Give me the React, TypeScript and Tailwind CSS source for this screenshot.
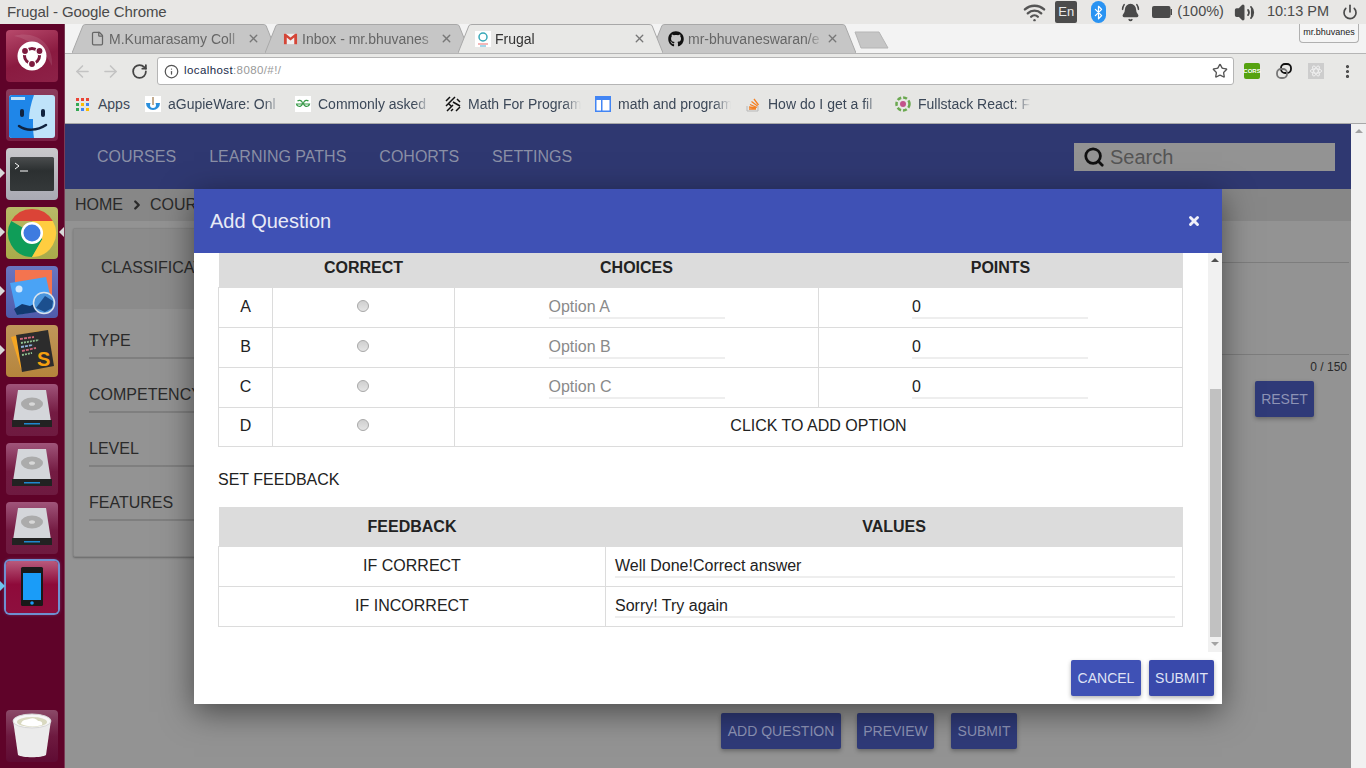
import React from 'react';
import { ArrowLeft, ArrowRight, RotateCw, Info, Star, X, Wifi, BellRing, Volume2, Power, Search, ChevronRight, EllipsisVertical, File, Bluetooth } from 'lucide-react';
import { FaGithub } from 'react-icons/fa';

const Tile: React.FC<{ bg: string; arrow?: 'left' | 'both' | 'blue'; active?: boolean; children: React.ReactNode }> = ({ bg, arrow, active, children }) => (
  <div className="relative w-[64px] flex justify-center">
    {arrow && (
      <span className={`absolute left-0 top-[20px] w-0 h-0 border-y-[5px] border-y-transparent border-l-[5px] ${arrow === 'blue' ? 'border-l-[#6ec6f0]' : 'border-l-[#d8d8d8]'}`} />
    )}
    {arrow === 'both' && (
      <span className="absolute right-0 top-[20px] w-0 h-0 border-y-[5px] border-y-transparent border-r-[5px] border-r-[#d8d8d8]" />
    )}
    <div className={`w-[52px] h-[52px] rounded-[4px] overflow-hidden ${bg} ${active ? 'ring-2 ring-[#6f8fd0] shadow-[0_0_4px_#6f8fd0]' : ''}`}>
      {children}
    </div>
  </div>
);

const UbuntuIcon = () => (
  <svg viewBox="0 0 52 52" className="w-full h-full">
    <path d="M8 6c20-6 40 6 38 30-6-14-20-26-38-30z" fill="#fff" opacity="0.1" />
    <circle cx="26" cy="26" r="14.500" fill="#fff" />
    <circle cx="26" cy="26" r="7.500" fill="none" stroke="#7d1a3e" strokeWidth="3" />
    <circle cx="33.500" cy="21" r="3.600" fill="#7d1a3e" stroke="#fff" strokeWidth="1.400" />
    <circle cx="19" cy="21" r="3.600" fill="#7d1a3e" stroke="#fff" strokeWidth="1.400" />
    <circle cx="26" cy="34" r="3.600" fill="#7d1a3e" stroke="#fff" strokeWidth="1.400" />
  </svg>
);

const FinderIcon = () => (
  <svg viewBox="0 0 52 52" className="w-full h-full">
    <rect x="3" y="6" width="46" height="43" rx="3" fill="#bfe3fa" />
    <path d="M3 9a3 3 0 0 1 3-3h22c-3 8-5 17-5 24h4c0 7 0 13 1 19H6a3 3 0 0 1-3-3z" fill="#1f86e8" />
    <rect x="5" y="8" width="14" height="3" fill="#bfe3fa" />
    <rect x="14" y="20" width="4" height="8" rx="2" fill="#10233f" />
    <rect x="35" y="20" width="4" height="8" rx="2" fill="#10233f" />
    <path d="M13 37c7 5 18 5 27-1" fill="none" stroke="#10233f" strokeWidth="2.500" strokeLinecap="round" />
  </svg>
);

const TerminalIcon = () => (
  <svg viewBox="0 0 52 52" className="w-full h-full">
    <defs>
      <linearGradient id="term" x1="0" y1="0" x2="0" y2="1">
        <stop offset="0" stopColor="#4a4d4e" />
        <stop offset="0.4" stopColor="#2c3031" />
        <stop offset="1" stopColor="#343839" />
      </linearGradient>
    </defs>
    <rect x="4" y="9" width="44" height="34" rx="1.500" fill="url(#term)" />
    <path d="M9 15l4 3-4 3" fill="none" stroke="#fff" strokeWidth="1" />
    <path d="M14 23h8" stroke="#fff" strokeWidth="1" />
  </svg>
);

const ChromeIcon = () => (
  <svg viewBox="0 0 52 52" className="w-full h-full">
    <path d="M5.200 14A24 24 0 0 1 46.800 14H26z" fill="#db4437" />
    <path d="M5.200 14A24 24 0 0 0 26 50L36.400 32 26 26z" fill="#0f9d58" />
    <path d="M46.800 14A24 24 0 0 1 26 50L36.400 32 26 14z" fill="#ffcd40" />
    <circle cx="26" cy="26" r="11" fill="#fff" />
    <circle cx="26" cy="26" r="8.500" fill="#3e7be0" />
  </svg>
);

const PhotosIcon = () => (
  <svg viewBox="0 0 52 52" className="w-full h-full">
    <rect x="9" y="4" width="37" height="34" fill="#f4744f" />
    <path d="M4 17l36-6 7 31-36 7z" fill="#4aa3f5" />
    <circle cx="13" cy="23" r="3.500" fill="#cfe8ff" />
    <path d="M8 43l8-5 8 2 8-4 5 9-26 4z" fill="#123a70" />
    <circle cx="38" cy="37" r="10.500" fill="#4a95dc" stroke="#d6e3ee" strokeWidth="1.500" />
    <path d="M30 42l9-12 8 5-1 7-7 4z" fill="#1c4f8e" />
  </svg>
);

const SublimeIcon = () => (
  <svg viewBox="0 0 52 52" className="w-full h-full">
    <path d="M5 12l28-6 4 26-22 12z" fill="#f5a623" />
    <path d="M10 10l32-5 6 36-32 6z" fill="#2c2c2c" />
    <path d="M14 14l14-2M16 26l14-3" stroke="#d0677a" strokeWidth="1.800" strokeDasharray="3 1" />
    <path d="M15 18l18-3M16 30l10-2" stroke="#8fbf8f" strokeWidth="1.800" strokeDasharray="2 1" />
    <path d="M15 22l12-2" stroke="#8fb0d8" strokeWidth="1.800" strokeDasharray="3 1" />
    <text x="31" y="41" fontSize="20" fontWeight="700" fill="#f5a00f" fontFamily="Liberation Sans, sans-serif">S</text>
  </svg>
);

const DriveIcon = () => (
  <svg viewBox="0 0 52 52" className="w-full h-full">
    <path d="M12 6h28l5 32H7z" fill="#d4d6da" />
    <ellipse cx="26" cy="20" rx="11" ry="6.500" fill="#ababab" />
    <ellipse cx="26" cy="20" rx="3" ry="1.800" fill="#d8d8d8" />
    <rect x="6" y="36" width="40" height="7" fill="#222" />
    <rect x="18" y="39" width="16" height="1.500" fill="#1f88d0" />
  </svg>
);

const PhoneIcon = () => (
  <svg viewBox="0 0 52 52" className="w-full h-full">
    <rect x="15" y="6" width="22" height="39" rx="1.500" fill="#191919" />
    <rect x="17" y="12" width="18" height="27" fill="#1a9cf8" />
    <circle cx="26" cy="42" r="1.800" fill="#1a9cf8" />
  </svg>
);

const TrashIcon = () => (
  <svg viewBox="0 0 52 52" className="w-full h-full">
    <path d="M7 10h38l-5 35c-4 3-24 3-28 0z" fill="#ebebeb" />
    <ellipse cx="26" cy="11" rx="19" ry="7" fill="#f7f7f7" stroke="#d5d5d5" />
    <ellipse cx="26" cy="12" rx="15" ry="5" fill="#d9d9c0" />
    <path d="M15 14c1-5 6-4 8-5 4-2 8 0 9 2 3 0 5 1 4 4-6 2-15 2-21-1z" fill="#fff" />
  </svg>
);

const Launcher = () => (
  <aside className="w-[65px] shrink-0 bg-[#5f0329] border-r border-[#7a3a55] flex flex-col gap-[7px] pt-[6px] pb-[6px]">
    <Tile bg="bg-[linear-gradient(160deg,#b84a6c,#8a1a40_55%,#8d2248)]"><UbuntuIcon /></Tile>
    <Tile bg="bg-[linear-gradient(180deg,#8b3c5c,#7a1f45)]"><FinderIcon /></Tile>
    <Tile bg="bg-[linear-gradient(180deg,#c9c9cc,#a9a9b3)]" arrow="left"><TerminalIcon /></Tile>
    <Tile bg="bg-[linear-gradient(180deg,#b8ba68,#a9ab4a)]" arrow="both"><ChromeIcon /></Tile>
    <Tile bg="bg-[linear-gradient(180deg,#6a76c0,#4f5cab)]" arrow="left"><PhotosIcon /></Tile>
    <Tile bg="bg-[linear-gradient(180deg,#c0965a,#b5853c)]" arrow="left"><SublimeIcon /></Tile>
    <Tile bg="bg-[linear-gradient(180deg,#a0557a,#741b42_55%,#6e1a40)]"><DriveIcon /></Tile>
    <Tile bg="bg-[linear-gradient(180deg,#a0557a,#741b42_55%,#6e1a40)]"><DriveIcon /></Tile>
    <Tile bg="bg-[linear-gradient(180deg,#a0557a,#741b42_55%,#6e1a40)]"><DriveIcon /></Tile>
    <Tile bg="bg-[linear-gradient(180deg,#b85a7c,#8e0a3a_45%,#8e0f3e)]" arrow="blue" active><PhoneIcon /></Tile>
    <div className="mt-auto">
      <Tile bg="bg-[linear-gradient(180deg,#8b4a68,#6e1a40_50%,#5f0b33)]"><TrashIcon /></Tile>
    </div>
  </aside>
);

const TopPanel = () => (
  <header className="h-[24px] shrink-0 bg-[#e8e7e5] flex items-center text-[#4a4a4a]">
    <span className="pl-[7px] text-[15px] tracking-[-0.100px]">Frugal - Google Chrome</span>
    <div className="ml-auto flex items-center">
      <Wifi size={23} strokeWidth={2.500} className="text-[#555] mr-[9px]" />
      <span className="w-[22px] h-[22px] bg-[#4c4c4c] text-[#e8e8e8] rounded-[2px] text-[13px] flex items-center justify-center mr-[14px]">En</span>
      <span className="w-[15px] h-[22px] rounded-full bg-[#2a93f2] flex items-center justify-center mr-[15px]">
        <Bluetooth size={15} strokeWidth={2} className="text-white" />
      </span>
      <BellRing size={19} fill="#4a4a4a" className="text-[#4a4a4a] mr-[12px]" />
      <svg viewBox="0 0 20 12" className="w-[20px] h-[12px] mr-[5px]">
        <rect width="18.500" height="12" rx="2" fill="#4a4a4a" />
        <rect x="18.500" y="3" width="1.500" height="6" fill="#4a4a4a" />
      </svg>
      <span className="text-[14.500px] mr-[10px]">(100%)</span>
      <Volume2 size={21} fill="#4a4a4a" className="text-[#4a4a4a] mr-[12px]" />
      <span className="text-[14.500px] mr-[13px]">10:13 PM</span>
      <Power size={16} strokeWidth={2.500} className="text-[#4a4a4a] mr-[8px]" />
    </div>
  </header>
);

const GmailIcon = () => (
  <svg viewBox="0 0 16 16" className="w-[15px] h-[15px]">
    <rect x="1" y="3" width="14" height="11" fill="#eee" />
    <path d="M1 3v11h3V7l4 3 4-3v7h3V3h-2L8 7 3 3z" fill="#d44638" />
  </svg>
);

const FrugalIcon = () => (
  <svg viewBox="0 0 16 16" className="w-[16px] h-[16px]">
    <rect width="16" height="16" fill="#fff" />
    <circle cx="8" cy="6" r="4" fill="none" stroke="#38a8b8" strokeWidth="1.500" />
    <path d="M3 13h10" stroke="#f0a0a0" strokeWidth="1.500" />
    <path d="M5 15h6" stroke="#48b0d8" />
  </svg>
);

const Tab: React.FC<{ title: string; icon: React.ReactNode; active?: boolean }> = ({ title, icon, active }) => (
  <div className={`relative w-[205px] h-[29px] -mr-[12px] shrink-0 flex items-center pl-[17px] pr-[17px] ${active ? 'z-10 text-[#333]' : 'text-[#666]'}`}>
    <svg viewBox="0 0 205 29" className="absolute inset-0 w-full h-full">
      <path d="M0 29 L11 1.500 Q12 0.500 14 0.500 H191 Q193 0.500 194 1.500 L205 29" fill={active ? '#e8e8e6' : '#c6c6c6'} stroke="#a8a8a8" />
    </svg>
    <span className="relative w-[16px] flex justify-center shrink-0">{icon}</span>
    <span className="relative ml-[4px] pt-[1px] flex-1 whitespace-nowrap overflow-hidden text-[14px] [mask-image:linear-gradient(to_right,black_88%,transparent)]">{title}</span>
    <X size={13} strokeWidth={2.500} className="relative text-[#777] shrink-0 ml-[3px]" />
  </div>
);

const TabStrip = () => (
  <div className="relative h-[29px] shrink-0 bg-[#f3f3f3] flex items-end pl-[7px]">
    <Tab title="M.Kumarasamy Coll" icon={<File size={15} className="text-[#666]" />} />
    <Tab title="Inbox - mr.bhuvanes" icon={<GmailIcon />} />
    <Tab title="Frugal" icon={<FrugalIcon />} active />
    <Tab title="mr-bhuvaneswaran/e" icon={<FaGithub size={16} className="text-[#111]" />} />
    <svg viewBox="0 0 35 18" className="ml-[10px] mb-[4px] w-[35px] h-[18px]">
      <path d="M1 1h24l9 16H7z" fill="#c6c6c6" stroke="#b5b5b5" />
    </svg>
    <div className="absolute right-[7px] top-0 w-[60px] h-[19px] bg-[#f5f5f5] border border-t-0 border-[#b0b0b0] rounded-b-[4px] flex items-center justify-center text-[9px] text-[#222]">mr.bhuvanes</div>
  </div>
);

const Toolbar = () => (
  <div className="h-[37px] shrink-0 bg-[#e8e8e6] border-t border-[#b5b5b5] flex items-center pl-[8px] pb-[2px]">
    <ArrowLeft size={19} className="text-[#c3c3c3]" />
    <ArrowRight size={19} className="text-[#c3c3c3] ml-[9px]" />
    <RotateCw size={17} strokeWidth={2.500} className="text-[#444] ml-[11px]" />
    <div className="ml-[9px] w-[1077px] h-[28px] bg-white border border-[#b5b5b5] rounded-[3px] flex items-center pl-[6px] pr-[5px]">
      <Info size={15} className="text-[#555]" />
      <span className="ml-[5px] text-[11.500px] tracking-[0.400px] text-[#1a2a4a]">localhost<span className="text-[#999]">:8080/#!/</span></span>
      <Star size={16} strokeWidth={2} className="ml-auto text-[#555]" />
    </div>
    <div className="ml-[10px] w-[16px] h-[16px] rounded-[2px] bg-[#55a20f] flex items-center justify-center text-[6px] font-bold text-white">CORS</div>
    <svg viewBox="0 0 16 16" className="ml-[16px] w-[16px] h-[16px]">
      <rect x="5" y="1" width="10" height="9" rx="4" fill="none" stroke="#111" strokeWidth="1.800" />
      <rect x="1" y="6" width="10" height="9" rx="4" fill="none" stroke="#777" strokeWidth="1.800" />
    </svg>
    <div className="ml-[16px] w-[16px] h-[16px] bg-[#cdcdcd] flex items-center justify-center">
      <svg viewBox="0 0 16 16" className="w-[14px] h-[14px]" fill="none" stroke="#f2f2f2" strokeWidth="1">
        <ellipse cx="8" cy="8" rx="6.500" ry="2.500" />
        <ellipse cx="8" cy="8" rx="6.500" ry="2.500" transform="rotate(60 8 8)" />
        <ellipse cx="8" cy="8" rx="6.500" ry="2.500" transform="rotate(120 8 8)" />
      </svg>
    </div>
    <EllipsisVertical size={17} strokeWidth={2.500} className="ml-[15px] text-[#444]" />
  </div>
);

const AppsIcon = () => (
  <svg viewBox="0 0 13 13" className="w-[13px] h-[13px]">
    {['#ea4335', '#ea4335', '#ea4335', '#34a853', '#fbbc05', '#4285f4', '#34a853', '#4285f4', '#fbbc05'].map((c, i) => (
      <rect key={i} x={(i % 3) * 5} y={Math.floor(i / 3) * 5} width="3" height="3" fill={c} />
    ))}
  </svg>
);

const GupieIcon = () => (
  <svg viewBox="0 0 16 16" className="w-[16px] h-[16px]">
    <rect width="16" height="16" fill="#fff" />
    <path d="M1 7a7 7 0 1 0 14 0z" fill="#2a8fdc" />
    <circle cx="8" cy="9" r="3" fill="#fff" />
    <path d="M8 1v8" stroke="#8a5a20" />
  </svg>
);

const GfgIcon = () => (
  <svg viewBox="0 0 16 16" className="w-[16px] h-[16px]">
    <rect width="16" height="16" fill="#fff" />
    <path d="M8 8H1.500a3 3 0 1 0 1-3M8 8h6.500a3 3 0 1 1-1-3" fill="none" stroke="#3a9a4a" strokeWidth="1.200" />
  </svg>
);

const MathIcon = () => (
  <svg viewBox="0 0 16 16" className="w-[16px] h-[16px]" fill="none" stroke="#111" strokeWidth="1.500">
    <path d="M1 5l4-4M1 10l9-9M2 15l6-6M11 15l4-4M6 15l2-2M12 3l3 3M8 6l7 4M3 7l4 4" />
  </svg>
);

const WindowIcon = () => (
  <svg viewBox="0 0 16 16" className="w-[16px] h-[16px]">
    <rect x="0.750" y="0.750" width="14.500" height="14.500" fill="#fff" stroke="#4285f4" strokeWidth="1.500" />
    <rect x="1" y="1" width="14" height="3" fill="#4285f4" />
    <rect x="6" y="4" width="1.500" height="11" fill="#4285f4" />
  </svg>
);

const StackIcon = () => (
  <svg viewBox="0 0 16 16" className="w-[16px] h-[16px]" fill="none">
    <path d="M2 10v5h11v-5" stroke="#b8b8b8" />
    <path d="M4 13h7M4 11l7 1M5 8.500l7 3M6.500 5.500l6 4.500M9 3l4.500 6" stroke="#f48024" strokeWidth="1.300" />
  </svg>
);

const FullstackIcon = () => (
  <svg viewBox="0 0 16 16" className="w-[16px] h-[16px]">
    <circle cx="8" cy="8" r="6.500" fill="none" stroke="#6aa84f" strokeWidth="2.500" strokeDasharray="4 2" />
    <circle cx="8" cy="8" r="3" fill="#c2528b" />
  </svg>
);

const bookmarks: { label: string; icon: React.ReactNode }[] = [
  { label: 'aGupieWare: Onl', icon: <GupieIcon /> },
  { label: 'Commonly asked', icon: <GfgIcon /> },
  { label: 'Math For Program', icon: <MathIcon /> },
  { label: 'math and program', icon: <WindowIcon /> },
  { label: 'How do I get a fil', icon: <StackIcon /> },
  { label: 'Fullstack React: F', icon: <FullstackIcon /> },
];

const BookmarkBar = () => (
  <div className="h-[34px] shrink-0 bg-[#e6e6e4] border-b border-[#a8a8a8] flex items-center pl-[11px] pb-[5px] text-[14px] text-[#3c4858]">
    <div className="w-[69px] flex items-center gap-[9px]"><AppsIcon /><span>Apps</span></div>
    {bookmarks.map(b => (
      <div key={b.label} className="w-[150px] flex items-center gap-[7px]">
        <span className="shrink-0">{b.icon}</span>
        <span className="w-[113px] whitespace-nowrap overflow-hidden [mask-image:linear-gradient(to_right,black_85%,transparent)]">{b.label}</span>
      </div>
    ))}
  </div>
);

const PageButton: React.FC<{ label: string; className: string }> = ({ label, className }) => (
  <div className={`h-[36px] rounded-[2px] bg-[#2f3a78] text-[#8d93b5] text-[14px] flex items-center justify-center shadow-[0_2px_4px_rgba(0,0,0,0.3)] ${className}`}>{label}</div>
);

const fields = ['TYPE', 'COMPETENCY', 'LEVEL', 'FEATURES'];

// page behind the dialog, colours already dimmed by the backdrop
const Page = () => (
  <div className="h-full flex flex-col bg-[#939393] text-[#2a2a2a]">
    <nav className="h-[65px] shrink-0 bg-[#2f3871] flex items-center pl-[32px] gap-[33px] text-[16px] text-[#8a8fa6]">
      <span>COURSES</span>
      <span>LEARNING PATHS</span>
      <span>COHORTS</span>
      <span>SETTINGS</span>
      <div className="ml-auto mr-[16px] w-[261px] h-[28px] bg-[#939393] flex items-center pl-[9px] gap-[5px]">
        <Search size={22} strokeWidth={3} className="text-[#111]" />
        <span className="text-[20px] text-[#555]">Search</span>
      </div>
    </nav>
    <div className="h-[32px] shrink-0 bg-[#878787] flex items-center pl-[10px] text-[16px]">
      <span>HOME</span>
      <ChevronRight size={14} strokeWidth={4} className="mx-[6.500px]" />
      <span>COURSES</span>
    </div>
    <div className="flex-1 flex">
      <div className="flex flex-col">
        <div className="ml-[8px] mt-[7px] w-[600px] h-[329px] bg-[#939393] border border-[#858585] rounded-[2px] shadow-[0_1px_2px_rgba(0,0,0,0.3)]">
          <div className="h-[80px] bg-[#8b8b8b] flex items-center pl-[27px] pb-[2px] text-[16px]">CLASSIFICATION</div>
          <div className="pl-[15px] pt-[20px] flex flex-col gap-[24px]">
            {fields.map(f => (
              <div key={f} className="h-[30px] border-b-2 border-[#7f7f7f] text-[16px]">{f}</div>
            ))}
          </div>
        </div>
        <div className="mt-[156px] ml-[656px] flex gap-[16px] w-[300px]">
          <PageButton label="ADD QUESTION" className="w-[120px] shrink-0" />
          <PageButton label="PREVIEW" className="w-[77px] shrink-0" />
          <PageButton label="SUBMIT" className="w-[66px] shrink-0 ml-[1px]" />
        </div>
      </div>
    </div>
  </div>
);

// right hand column that peeks out beside the dialog
const PageRight = () => (
  <div className="absolute right-[17px] top-[138px] w-[127px] text-[#2a2a2a]">
    <div className="h-[93px] border-y border-[#7d7d7d]" />
    <div className="text-right text-[12px] leading-[19px] pr-[2px] mt-[3px]">0 / 150</div>
    <PageButton label="RESET" className="w-[59px] ml-[33px] mt-[4px]" />
  </div>
);

const Radio = () => (
  <span className="inline-block w-[12px] h-[12px] rounded-full border border-[#a9a9a9] bg-[linear-gradient(180deg,#cfcfcf,#e4e4e4)] -translate-x-[1px]" />
);

const Field: React.FC<{ value: string; muted?: boolean }> = ({ value, muted }) => (
  <div className={`mx-auto w-[176px] h-[24px] border-b-2 border-[#eeeeee] text-left ${muted ? 'text-[#8a8a8a]' : 'text-[#222]'}`}>{value}</div>
);

const options = ['A', 'B', 'C'];

const ChoicesTable = () => (
  <table className="w-[964px] table-fixed border-collapse text-[16px] text-[#222]">
    <colgroup>
      <col className="w-[54px]" />
      <col className="w-[182px]" />
      <col className="w-[364px]" />
      <col className="w-[364px]" />
    </colgroup>
    <thead>
      <tr className="h-[34px] bg-[#dcdcdc] font-bold">
        <th className="pb-[3px]" />
        <th className="pb-[3px]">CORRECT</th>
        <th className="pb-[3px]">CHOICES</th>
        <th className="pb-[3px]">POINTS</th>
      </tr>
    </thead>
    <tbody>
      {options.map(o => (
        <tr key={o} className="h-[40px] text-center">
          <td className="border border-[#dcdcdc] pb-[1px]">{o}</td>
          <td className="border border-[#dcdcdc] pb-[1px]"><Radio /></td>
          <td className="border border-[#dcdcdc] pb-[1px]"><Field value={`Option ${o}`} muted /></td>
          <td className="border border-[#dcdcdc] pb-[1px] pr-[1px]"><Field value="0" /></td>
        </tr>
      ))}
      <tr className="h-[39px] text-center">
        <td className="border border-[#dcdcdc] pb-[1px]">D</td>
        <td className="border border-[#dcdcdc] pb-[1px]"><Radio /></td>
        <td colSpan={2} className="border border-[#dcdcdc] pb-[1px]">CLICK TO ADD OPTION</td>
      </tr>
    </tbody>
  </table>
);

const feedback = [
  { label: 'IF CORRECT', value: 'Well Done!Correct answer' },
  { label: 'IF INCORRECT', value: 'Sorry! Try again' },
];

const FeedbackTable = () => (
  <table className="w-[964px] table-fixed border-collapse text-[16px] text-[#222]">
    <colgroup>
      <col className="w-[387px]" />
      <col className="w-[577px]" />
    </colgroup>
    <thead>
      <tr className="h-[40px] bg-[#dcdcdc] font-bold">
        <th className="pt-[1px]">FEEDBACK</th>
        <th className="pt-[1px]">VALUES</th>
      </tr>
    </thead>
    <tbody>
      {feedback.map(f => (
        <tr key={f.label} className="h-[40px]">
          <td className="border border-[#dcdcdc] text-center pb-[1px]">{f.label}</td>
          <td className="border border-[#dcdcdc] pl-[9px] pr-[7px] pb-[1px]">
            <div className="h-[24px] border-b-2 border-[#eeeeee]">{f.value}</div>
          </td>
        </tr>
      ))}
    </tbody>
  </table>
);

const Dialog = () => (
  <div className="absolute left-[129px] top-[65px] w-[1028px] h-[515px] bg-white flex flex-col shadow-[0_8px_30px_rgba(0,0,0,0.5)]">
    <div className="h-[64px] shrink-0 bg-[#3f51b5] text-white flex items-center justify-between pl-[16px] pr-[21px]">
      <span className="text-[20px] text-[#e8eaf6]">Add Question</span>
      <X size={14} strokeWidth={5} className="text-[#f0f0f8]" />
    </div>
    <div className="h-[399px] shrink-0 flex">
      <div className="flex-1 pl-[24px]">
        <ChoicesTable />
        <div className="mt-[23px] text-[16px] text-[#222] leading-[20px]">SET FEEDBACK</div>
        <div className="mt-[17px]"><FeedbackTable /></div>
      </div>
      <div className="w-[14px] shrink-0 bg-[#f1f1f1] flex flex-col items-center">
        <span className="mt-[5px] w-0 h-0 border-x-[4px] border-x-transparent border-b-[4px] border-b-[#505050]" />
        <div className="mt-[127px] w-[11px] h-[248px] bg-[#c1c1c1]" />
        <span className="mt-[5px] w-0 h-0 border-x-[4px] border-x-transparent border-t-[4px] border-t-[#a3a3a3]" />
      </div>
    </div>
    <div className="flex-1 flex justify-end items-center gap-[8px] pr-[8px] text-[14px] text-[#dfe2f4]">
      <div className="w-[70px] h-[36px] rounded-[2px] bg-[#3f51b5] flex items-center justify-center shadow-[0_2px_4px_rgba(0,0,0,0.3)]">CANCEL</div>
      <div className="w-[65px] h-[36px] rounded-[2px] bg-[#3949ab] flex items-center justify-center shadow-[0_2px_4px_rgba(0,0,0,0.3)]">SUBMIT</div>
    </div>
  </div>
);

const App: React.FC = () => (
  <div className="w-[1366px] h-[768px] overflow-hidden flex flex-col font-['Liberation_Sans',sans-serif]">
    <TopPanel />
    <div className="flex-1 flex min-h-0">
      <Launcher />
      <div className="flex-1 flex flex-col min-w-0">
        <TabStrip />
        <Toolbar />
        <BookmarkBar />
        <div className="relative flex-1 min-h-0 flex overflow-hidden">
          <div className="flex-1 min-w-0"><Page /></div>
          <div className="w-[15px] shrink-0 bg-[#f1f1f1] flex justify-center">
            <span className="mt-[5px] w-0 h-0 border-x-[4px] border-x-transparent border-b-[4px] border-b-[#a3a3a3]" />
          </div>
          <PageRight />
          <Dialog />
        </div>
      </div>
    </div>
  </div>
);

export default App;
